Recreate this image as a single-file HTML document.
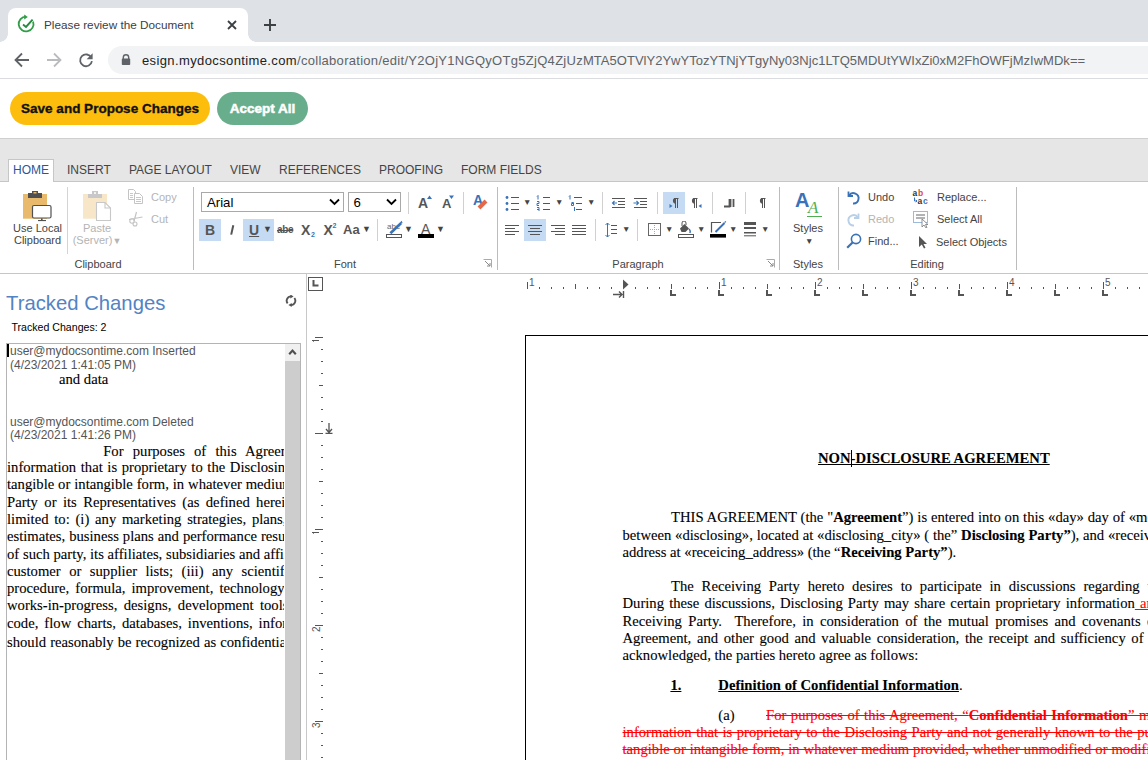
<!DOCTYPE html>
<html><head><meta charset="utf-8">
<style>
*{margin:0;padding:0;box-sizing:border-box}
html,body{width:1148px;height:760px;overflow:hidden;background:#fff;font-family:"Liberation Sans",sans-serif;position:relative}
.a{position:absolute}
.nw{white-space:nowrap}
/* chrome */
#tabbar{left:0;top:0;width:1148px;height:42px;background:#dee1e6}
#tab{left:8px;top:8px;width:240px;height:34px;background:#fff;border-radius:8px 8px 0 0}
#tab:before,#tab:after{content:"";position:absolute;bottom:0;width:8px;height:8px;background:radial-gradient(circle at 0 0,transparent 8px,#fff 8.5px)}
#tab:before{left:-8px;background:radial-gradient(circle at 0 0,#dee1e6 7.5px,#fff 8px)}
#tab:after{right:-8px;background:radial-gradient(circle at 100% 0,#dee1e6 7.5px,#fff 8px)}
#toolbar{left:0;top:42px;width:1148px;height:36px;background:#fff}
#tbline{left:0;top:78px;width:1148px;height:1px;background:#dadce0}
#omni{left:108px;top:46px;width:1060px;height:28px;background:#f1f3f4;border-radius:14px}
.url{top:52.5px;font-size:13px;color:#5f6368}
#url b{font-weight:normal;color:#202124}
/* app header */
.btn{top:92px;height:33px;border-radius:17px;font-weight:bold;font-size:13.5px;line-height:33px;text-align:center}
#save{left:10px;width:200px;background:#fdbd0d;color:#111;-webkit-text-stroke:0.35px #111}
#acc{left:217px;width:91px;background:#69ae8c;color:#fff;-webkit-text-stroke:0.5px #fff}
#hdrline{left:0;top:138px;width:1148px;height:1px;background:#cfcfcf}
#rtabs{left:0;top:139px;width:1148px;height:43px;background:#e6e6e6}
#rtabline{left:0;top:181px;width:1148px;height:1px;background:#c6c6c6}
.rt{top:163px;font-size:12px;color:#444}
#home{left:8px;top:159px;width:46px;height:23px;background:#fff;border:1px solid #c6c6c6;border-bottom:none}
#rbody{left:0;top:182px;width:1148px;height:91px;background:#fff}
#rbline{left:0;top:273px;width:1148px;height:1px;background:#c6c6c6}
.gsep{top:187px;width:1px;height:83px;background:#bcbcbc}
.glabel{top:258px;font-size:11px;color:#444;text-align:center}
.lbl{font-size:11px;color:#444}
.tri{font-size:8.5px;color:#444;line-height:8px}
.dis{color:#b4b4b4}
.hl{background:#c5daf3}
.tcu{left:10px;font-size:12px;color:#555}
.tcd{left:10px;font-size:12px;color:#555}
.ser{font-family:"Liberation Serif",serif;color:#000}
.t{position:absolute;font-family:"Liberation Serif",serif;font-size:14.67px;line-height:17px;white-space:nowrap;color:#000;-webkit-text-stroke:0.1px currentColor}
.b{font-weight:bold}
.u{text-decoration:underline}
.del{color:#f00;text-decoration:line-through}
.ins{color:#f00;text-decoration:underline}
.rn{font-size:10px;color:#555;line-height:10px}
</style></head><body>
<!-- CHROME TAB BAR -->
<div id="tabbar" class="a"></div>
<div id="tab" class="a"></div>
<svg class="a" style="left:16px;top:14px" width="20" height="20" viewBox="0 0 20 20">
 <path d="M10 2.6A7.4 7.4 0 1 0 17.1 7.6" fill="none" stroke="#2f9e47" stroke-width="1.8"/>
 <path d="M8.2 0.6L11.8 3L8.2 5.6Z" fill="#2f9e47"/>
 <path d="M7 10.6L10 13L16.6 5.6" fill="none" stroke="#238a3e" stroke-width="1.9"/>
</svg>
<div class="a nw" style="left:44px;top:18px;font-size:11.76px;color:#3c4043">Please review the Document</div>
<svg class="a" style="left:227px;top:20px" width="10" height="10" viewBox="0 0 10 10"><path d="M1 1L9 9M9 1L1 9" stroke="#3c4043" stroke-width="1.8"/></svg>
<svg class="a" style="left:264px;top:19px" width="12" height="12" viewBox="0 0 12 12"><path d="M6 0V12M0 6H12" stroke="#3c4043" stroke-width="1.9"/></svg>
<!-- TOOLBAR -->
<div id="toolbar" class="a"></div>
<svg class="a" style="left:14px;top:52px" width="16" height="16" viewBox="0 0 16 16"><path d="M15 8H2M8 1.5L1.5 8L8 14.5" fill="none" stroke="#5f6368" stroke-width="1.8"/></svg>
<svg class="a" style="left:46px;top:52px" width="16" height="16" viewBox="0 0 16 16"><path d="M1 8H14M8 1.5L14.5 8L8 14.5" fill="none" stroke="#b9bbbe" stroke-width="1.8"/></svg>
<svg class="a" style="left:78px;top:52px" width="16" height="16" viewBox="0 0 16 16"><path d="M13.3 5.6A5.9 5.9 0 1 0 13.9 9.2" fill="none" stroke="#5f6368" stroke-width="1.8"/><path d="M14.6 1.2V7.2H8.6Z" fill="#5f6368"/></svg>
<div id="omni" class="a"></div>
<svg class="a" style="left:121px;top:54px" width="10" height="11" viewBox="0 0 10 11"><path d="M2.3 5V3.4A2.7 2.7 0 0 1 7.7 3.4V5" fill="none" stroke="#5f6368" stroke-width="1.4"/><rect x="0.8" y="4.6" width="8.4" height="6.4" rx="0.8" fill="#5f6368"/></svg>
<div class="a nw url" style="left:142px;letter-spacing:0.38px;color:#202124">esign.mydocsontime.com</div>
<div class="a nw url" style="left:297px;letter-spacing:0.29px">/collaboration/edit/Y2OjY1NGQyOTg5ZjQ4ZjUz</div>
<div class="a nw url" style="left:583px;letter-spacing:0.02px">MTA5OTVlY2YwYTozYTNjYTgyNy03Njc1LTQ5MDUtYWIxZi0xM2FhOWFjMzIwMDk==</div>
<div id="tbline" class="a"></div>
<!-- APP HEADER -->
<div id="save" class="a btn nw">Save and Propose Changes</div>
<div id="acc" class="a btn nw">Accept All</div>
<div id="hdrline" class="a"></div>
<!-- RIBBON TABS -->
<div id="rtabs" class="a"></div>
<div id="rtabline" class="a"></div>
<div id="home" class="a"></div>
<div class="a rt nw" style="left:13px;color:#2b5797">HOME</div>
<div class="a rt nw" style="left:67px">INSERT</div>
<div class="a rt nw" style="left:129px">PAGE LAYOUT</div>
<div class="a rt nw" style="left:230px">VIEW</div>
<div class="a rt nw" style="left:279px">REFERENCES</div>
<div class="a rt nw" style="left:379px">PROOFING</div>
<div class="a rt nw" style="left:461px">FORM FIELDS</div>
<div id="rbody" class="a"></div>
<div id="rbline" class="a"></div>
<!-- CLIPBOARD GROUP -->
<svg class="a" style="left:22px;top:190px" width="32" height="33" viewBox="0 0 32 33">
 <rect x="1" y="4" width="24" height="24.7" fill="#e9ba6b"/>
 <rect x="6" y="3" width="14" height="5" fill="#505050"/>
 <rect x="10" y="1" width="6" height="3" fill="#505050"/>
 <rect x="11.5" y="2" width="3" height="1.5" fill="#e9ba6b"/>
 <rect x="10.5" y="15.5" width="18.5" height="12.5" rx="1.5" fill="#fff" stroke="#505050" stroke-width="1.2"/>
 <rect x="19" y="28.5" width="1.6" height="1.5" fill="#505050"/>
 <rect x="16" y="30" width="8" height="1.1" fill="#505050"/>
</svg>
<div class="a lbl nw" style="left:13px;top:222.3px;width:49px;text-align:center;line-height:12px;color:#444">Use Local<br>Clipboard</div>
<div class="a" style="left:67px;top:187px;width:1px;height:67px;background:#d4d4d4"></div>
<svg class="a" style="left:82px;top:190px" width="30" height="32" viewBox="0 0 30 32">
 <rect x="1" y="4" width="24" height="24.7" fill="#f8e6c8"/>
 <rect x="6" y="4" width="14" height="4" fill="#c8c8c8"/>
 <rect x="10" y="1" width="6" height="3.5" fill="#c8c8c8"/>
 <rect x="12" y="2.3" width="2" height="1.5" fill="#fff"/>
 <path d="M14.5 12.5H23L28.5 18V30.5H14.5Z" fill="#fff" stroke="#c8c8c8" stroke-width="1.1"/>
 <path d="M23 12.5V18H28.5" fill="none" stroke="#c8c8c8" stroke-width="1.1"/>
</svg>
<div class="a lbl nw dis" style="left:71px;top:222.3px;width:52px;text-align:center;line-height:12px">Paste<br>(Server)<span style="font-size:9px">&#9660;</span></div>
<svg class="a" style="left:127px;top:189px" width="17" height="15" viewBox="0 0 17 15">
 <path d="M1.5 0.5H6.5L8.5 2.5V10.5H1.5Z" fill="#fff" stroke="#c4c4c4"/>
 <path d="M3 4.5H6M3 6.5H6M3 8.5H6" stroke="#b5cbe6" stroke-width="1"/>
 <path d="M7.5 4.5H12.5L15.5 7.5V14.5H7.5Z" fill="#fff" stroke="#c4c4c4"/>
 <path d="M9 8.5H14M9 10.5H14M9 12.5H14" stroke="#b5cbe6" stroke-width="1"/>
</svg>
<div class="a lbl nw dis" style="left:151px;top:191px">Copy</div>
<svg class="a" style="left:128px;top:211px" width="16" height="16" viewBox="0 0 16 16">
 <path d="M8.5 1L6 10M1 8.5L14.5 6" stroke="#c4c4c4" stroke-width="1.2" fill="none"/>
 <circle cx="4" cy="10" r="2.2" fill="none" stroke="#c4c4c4" stroke-width="1.1"/>
 <circle cx="7" cy="13" r="2" fill="none" stroke="#c4c4c4" stroke-width="1.1"/>
</svg>
<div class="a lbl nw dis" style="left:151px;top:213px">Cut</div>
<div class="a glabel nw" style="left:60px;width:76px">Clipboard</div>
<div class="a gsep" style="left:193px"></div>
<!-- FONT GROUP -->
<div class="a" style="left:201px;top:192px;width:143px;height:20px;border:1px solid #a9a9a9;background:#fff"></div>
<div class="a nw" style="left:207px;top:195px;font-size:13.2px;color:#000">Arial</div>
<svg class="a" style="left:329px;top:198px" width="11" height="8" viewBox="0 0 11 8"><path d="M1 1.5L5.5 6L10 1.5" fill="none" stroke="#000" stroke-width="1.8"/></svg>
<div class="a" style="left:348px;top:192px;width:53px;height:20px;border:1px solid #a9a9a9;background:#fff"></div>
<div class="a nw" style="left:353.5px;top:195px;font-size:13.2px;color:#000">6</div>
<svg class="a" style="left:386px;top:198px" width="11" height="8" viewBox="0 0 11 8"><path d="M1 1.5L5.5 6L10 1.5" fill="none" stroke="#000" stroke-width="1.8"/></svg>
<div class="a" style="left:408px;top:192px;width:1px;height:22px;background:#d0d0d0"></div>
<div class="a nw" style="left:418px;top:195px;font-size:14px;color:#555;font-weight:bold">A</div>
<svg class="a" style="left:427px;top:195px" width="5" height="4"><path d="M0 4L2.5 0.5L5 4Z" fill="#3a72b8"/></svg>
<div class="a nw" style="left:442px;top:196px;font-size:13px;color:#555;font-weight:bold">A</div>
<svg class="a" style="left:449px;top:195px" width="5" height="4"><path d="M0 0.5L2.5 4L5 0.5Z" fill="#3a72b8"/></svg>
<div class="a" style="left:463px;top:192px;width:1px;height:22px;background:#d0d0d0"></div>
<div class="a nw" style="left:473px;top:192px;font-size:14px;color:#3a72b8;font-weight:bold">A</div>
<svg class="a" style="left:477px;top:198px" width="12" height="12" viewBox="0 0 12 12"><path d="M2 10L9 3" stroke="#e2694a" stroke-width="4"/></svg>
<div class="a hl" style="left:199px;top:219px;width:22px;height:22px"></div>
<div class="a nw" style="left:205px;top:222px;font-size:14px;color:#555;font-weight:bold">B</div>
<svg class="a" style="left:228px;top:224px" width="8" height="12" viewBox="0 0 8 12"><path d="M3.2 10.6L5.3 1.2" stroke="#555" stroke-width="2"/></svg>
<div class="a hl" style="left:243px;top:219px;width:31px;height:22px"></div>
<div class="a nw" style="left:249px;top:222px;font-size:14px;color:#555;font-weight:bold;text-decoration:underline">U</div>
<div class="a nw" style="left:263px;top:224px;font-size:9px;color:#444">&#9660;</div>
<div class="a nw" style="left:277px;top:224px;font-size:10px;color:#555;font-weight:bold;text-decoration:line-through;letter-spacing:-0.3px">abe</div>
<div class="a nw" style="left:301px;top:222px;font-size:14px;color:#555;font-weight:bold">X</div>
<div class="a nw" style="left:311px;top:231px;font-size:7px;color:#3a72b8;font-weight:bold">2</div>
<div class="a nw" style="left:323.5px;top:222px;font-size:14px;color:#555;font-weight:bold">X</div>
<div class="a nw" style="left:332.5px;top:222px;font-size:7px;color:#3a72b8;font-weight:bold">2</div>
<div class="a nw" style="left:343px;top:222px;font-size:13px;color:#555;font-weight:bold">Aa</div>
<div class="a nw" style="left:362px;top:224px;font-size:9px;color:#444">&#9660;</div>
<div class="a" style="left:377px;top:219px;width:1px;height:22px;background:#d0d0d0"></div>
<svg class="a" style="left:385px;top:220px" width="20" height="20" viewBox="0 0 20 20">
 <text x="2" y="8.7" font-size="8" font-family="Liberation Sans" fill="#666">abc</text>
 <path d="M5.4 13.3L16.2 3" stroke="#3a72b8" stroke-width="2.6"/>
 <path d="M14.8 2.4L16.8 0.8L17.6 3.2Z" fill="#3a72b8"/>
 <rect x="1.5" y="14.5" width="15" height="3" fill="#fff" stroke="#555"/>
</svg>
<div class="a nw" style="left:404px;top:224px;font-size:9px;color:#444">&#9660;</div>
<div class="a nw" style="left:421px;top:221px;font-size:14px;color:#555">A</div>
<div class="a" style="left:418px;top:234px;width:16px;height:3.8px;background:#000"></div>
<div class="a nw" style="left:436px;top:224px;font-size:9px;color:#444">&#9660;</div>
<div class="a glabel nw" style="left:320px;width:50px">Font</div>
<svg class="a" style="left:483px;top:259px" width="9" height="9" viewBox="0 0 9 9"><path d="M0.5 0.5H8.5V8.5" fill="none" stroke="#aaa"/><path d="M2 2L7 7M7 4V7H4" fill="none" stroke="#888"/></svg>
<div class="a gsep" style="left:497px"></div>
<!-- PARAGRAPH GROUP -->
<svg class="a" style="left:504px;top:195px" width="16" height="16" viewBox="0 0 16 16">
 <circle cx="3" cy="2.5" r="1.4" fill="#3a72b8"/><circle cx="3" cy="8.5" r="1.4" fill="#3a72b8"/><circle cx="3" cy="14.5" r="1.4" fill="#3a72b8"/>
 <path d="M7 2.5H15M7 8.5H15M7 14.5H15" stroke="#555" stroke-width="1"/>
</svg>
<div class="a nw tri" style="left:523px;top:198px">&#9660;</div>
<svg class="a" style="left:536px;top:195px" width="16" height="16" viewBox="0 0 16 16">
 <path d="M2 0.5V4.5M1 1.5L2 0.5M1 6.5H3V8.5H1V10.5H3M1 12.5H3V16.5H1M1 14.5H3" stroke="#3a72b8" stroke-width="1" fill="none"/>
 <path d="M7 2.5H14M7 8.5H14M7 14.5H14" stroke="#555" stroke-width="1"/>
</svg>
<div class="a nw tri" style="left:555px;top:198px">&#9660;</div>
<svg class="a" style="left:568px;top:195px" width="16" height="16" viewBox="0 0 16 16">
 <path d="M2 0.5V4.5M1 1.5L2 0.5M3.5 7.5H5.5V10.5H3.5V8.5H5.5M6.5 12V16" stroke="#3a72b8" stroke-width="1" fill="none"/>
 <path d="M6 2.5H14M8 8.5H14M8 14.5H14" stroke="#555" stroke-width="1"/>
</svg>
<div class="a nw tri" style="left:587px;top:198px">&#9660;</div>
<div class="a" style="left:602px;top:192px;width:1px;height:22px;background:#d0d0d0"></div>
<svg class="a" style="left:611px;top:196px" width="15" height="13" viewBox="0 0 15 13">
 <path d="M1 2.5H14M7 5.5H14M7 8.5H14M1 11.5H14" stroke="#555" stroke-width="1"/>
 <path d="M6 7H1.5M3.5 5L1.5 7L3.5 9" stroke="#3a72b8" stroke-width="1.1" fill="none"/>
</svg>
<svg class="a" style="left:633px;top:196px" width="15" height="13" viewBox="0 0 15 13">
 <path d="M1 2.5H14M7 5.5H14M7 8.5H14M1 11.5H14" stroke="#555" stroke-width="1"/>
 <path d="M0.5 7H5.5M3.5 5L5.5 7L3.5 9" stroke="#3a72b8" stroke-width="1.1" fill="none"/>
</svg>
<div class="a" style="left:657px;top:192px;width:1px;height:22px;background:#d0d0d0"></div>
<div class="a hl" style="left:663px;top:192px;width:22px;height:22px"></div>
<svg class="a" style="left:672px;top:198px" width="7" height="10" viewBox="0 0 7 10"><path d="M2 0.5H6.5M3.5 0.5V10M5.5 0.5V10" stroke="#555" stroke-width="1" fill="none"/><path d="M3.5 0A2.6 2.8 0 0 0 3.5 5.6Z" fill="#555"/></svg>
<svg class="a" style="left:669px;top:204px" width="4" height="4"><path d="M0.5 0L3.5 2L0.5 4Z" fill="#3a72b8"/></svg>
<svg class="a" style="left:691px;top:198px" width="7" height="10" viewBox="0 0 7 10"><path d="M2 0.5H6.5M3.5 0.5V10M5.5 0.5V10" stroke="#555" stroke-width="1" fill="none"/><path d="M3.5 0A2.6 2.8 0 0 0 3.5 5.6Z" fill="#555"/></svg>
<svg class="a" style="left:698px;top:204px" width="4" height="4"><path d="M3.5 0L0.5 2L3.5 4Z" fill="#3a72b8"/></svg>
<div class="a" style="left:712px;top:192px;width:1px;height:22px;background:#d0d0d0"></div>
<svg class="a" style="left:724px;top:198px" width="11" height="10" viewBox="0 0 11 10"><path d="M0 8.5H5.5V1M6.5 1V9M9.5 1V9" stroke="#555" stroke-width="1.8" fill="none"/></svg>
<div class="a" style="left:745px;top:192px;width:1px;height:22px;background:#d0d0d0"></div>
<svg class="a" style="left:759px;top:198px" width="7" height="10" viewBox="0 0 7 10"><path d="M2 0.5H6.5M3.5 0.5V10M5.5 0.5V10" stroke="#555" stroke-width="1" fill="none"/><path d="M3.5 0A2.6 2.8 0 0 0 3.5 5.6Z" fill="#555"/></svg>
<svg class="a" style="left:505px;top:224px" width="14" height="12" viewBox="0 0 14 12"><path d="M0 1.5H14M0 4.5H10M0 7.5H14M0 10.5H10" stroke="#555" stroke-width="1.1"/></svg>
<div class="a hl" style="left:524px;top:219px;width:22px;height:22px"></div>
<svg class="a" style="left:528px;top:224px" width="14" height="12" viewBox="0 0 14 12"><path d="M0 1.5H14M2 4.5H12M0 7.5H14M2 10.5H12" stroke="#555" stroke-width="1.1"/></svg>
<svg class="a" style="left:551px;top:224px" width="14" height="12" viewBox="0 0 14 12"><path d="M0 1.5H14M4 4.5H14M0 7.5H14M4 10.5H14" stroke="#555" stroke-width="1.1"/></svg>
<svg class="a" style="left:572px;top:224px" width="14" height="12" viewBox="0 0 14 12"><path d="M0 1.5H14M0 4.5H14M0 7.5H14M0 10.5H14" stroke="#555" stroke-width="1.1"/></svg>
<div class="a" style="left:595px;top:219px;width:1px;height:22px;background:#d0d0d0"></div>
<svg class="a" style="left:605px;top:222px" width="14" height="16" viewBox="0 0 14 16"><path d="M6 3.5H12M6 7.5H12M6 11.5H12" stroke="#555" stroke-width="1"/><path d="M2.5 1V15M0.5 3L2.5 1L4.5 3M0.5 13L2.5 15L4.5 13" stroke="#3a72b8" stroke-width="1" fill="none"/></svg>
<div class="a nw tri" style="left:622px;top:225px">&#9660;</div>
<div class="a" style="left:637px;top:219px;width:1px;height:22px;background:#d0d0d0"></div>
<svg class="a" style="left:648px;top:223px" width="13" height="13" viewBox="0 0 13 13"><rect x="0.5" y="0.5" width="12" height="12" fill="none" stroke="#666"/><path d="M6.5 2V11M2 6.5H11" stroke="#aaa" stroke-dasharray="1 1"/></svg>
<div class="a nw tri" style="left:665px;top:225px">&#9660;</div>
<svg class="a" style="left:677px;top:221px" width="18" height="17" viewBox="0 0 18 17"><path d="M3 7.5L7.5 3L12 7.5L8.5 11H4.5Z" fill="#555"/><path d="M5 5V2A2 2 0 0 1 9 2V4" stroke="#555" stroke-width="1" fill="none"/><path d="M12 8Q14 10 12.8 12" stroke="#3a72b8" stroke-width="1.4" fill="none"/><rect x="1.5" y="13.5" width="15" height="3" fill="#fff" stroke="#555"/></svg>
<div class="a nw tri" style="left:697px;top:225px">&#9660;</div>
<svg class="a" style="left:710px;top:221px" width="17" height="17" viewBox="0 0 17 17"><path d="M1.5 11.5V1.5H11" stroke="#555" stroke-width="1.2" fill="none"/><path d="M5.5 11L14.5 2" stroke="#3a72b8" stroke-width="2"/><path d="M14.5 1.5L16 0.5" stroke="#3a72b8" stroke-width="1.2"/><rect x="0" y="13" width="16" height="3.6" fill="#000"/></svg>
<div class="a nw tri" style="left:729px;top:225px">&#9660;</div>
<svg class="a" style="left:744px;top:222px" width="12" height="15" viewBox="0 0 12 15"><rect x="0" y="0" width="12" height="3" fill="#555"/><rect x="0" y="5" width="12" height="2" fill="#555"/><rect x="0" y="10" width="12" height="1.5" fill="#555"/><rect x="0" y="13.3" width="12" height="1" fill="#555"/></svg>
<div class="a nw tri" style="left:761px;top:225px">&#9660;</div>
<div class="a glabel nw" style="left:600px;width:76px">Paragraph</div>
<svg class="a" style="left:766px;top:259px" width="9" height="9" viewBox="0 0 9 9"><path d="M0.5 0.5H8.5V8.5" fill="none" stroke="#aaa"/><path d="M2 2L7 7M7 4V7H4" fill="none" stroke="#888"/></svg>
<div class="a gsep" style="left:779px"></div>
<!-- STYLES -->
<div class="a nw" style="left:795px;top:189px;font-size:20px;color:#3a72b8;font-weight:bold">A</div>
<div class="a nw" style="left:808px;top:198px;font-size:17px;color:#4caf50;font-style:italic;font-family:'Liberation Serif',serif">A</div>
<div class="a" style="left:807px;top:216px;width:15px;height:1px;background:#4caf50"></div>
<div class="a lbl nw" style="left:790px;top:222px;width:36px;text-align:center">Styles</div>
<div class="a nw tri" style="left:805px;top:237px">&#9660;</div>
<div class="a glabel nw" style="left:790px;width:36px">Styles</div>
<div class="a gsep" style="left:838px"></div>
<!-- EDITING -->
<svg class="a" style="left:846px;top:189px" width="15" height="16" viewBox="0 0 15 16"><path d="M2.5 2.5V7H7" fill="none" stroke="#3a72b8" stroke-width="1.8"/><path d="M3 6.5A5.2 5.2 0 1 1 7 14.5" fill="none" stroke="#3a72b8" stroke-width="1.9"/></svg>
<div class="a lbl nw" style="left:868px;top:191px">Undo</div>
<svg class="a" style="left:846px;top:211px" width="15" height="16" viewBox="0 0 15 16"><path d="M12.5 2.5V7H8" fill="none" stroke="#b8cfe8" stroke-width="1.8"/><path d="M12 6.5A5.2 5.2 0 1 0 8 14.5" fill="none" stroke="#b8cfe8" stroke-width="1.9"/></svg>
<div class="a lbl nw dis" style="left:868px;top:213px">Redo</div>
<svg class="a" style="left:846px;top:233px" width="16" height="16" viewBox="0 0 16 16"><circle cx="10" cy="6" r="4.6" fill="none" stroke="#3a72b8" stroke-width="1.6"/><path d="M6.8 9.2L1.2 14.8" stroke="#3a72b8" stroke-width="2.2"/></svg>
<div class="a lbl nw" style="left:868px;top:235px">Find...</div>
<svg class="a" style="left:912px;top:189px" width="19" height="16" viewBox="0 0 19 16">
 <text x="0.5" y="7" font-size="8.5" font-weight="bold" font-family="Liberation Sans" fill="#333">a</text><text x="6" y="7" font-size="8.5" font-weight="bold" font-family="Liberation Sans" fill="#e04a2a">b</text>
 <text x="5.5" y="15" font-size="8.5" font-weight="bold" font-family="Liberation Sans" fill="#333">a</text><text x="11" y="15" font-size="8.5" font-weight="bold" font-family="Liberation Sans" fill="#3a72b8">c</text>
 <path d="M2.5 8.5V12H5M3.8 10.8L5 12L3.8 13.2" stroke="#3a72b8" stroke-width="1" fill="none"/>
</svg>
<div class="a lbl nw" style="left:937px;top:191px">Replace...</div>
<svg class="a" style="left:913px;top:211px" width="17" height="17" viewBox="0 0 17 17"><rect x="0.5" y="0.5" width="14" height="11" fill="none" stroke="#3a72b8" stroke-dasharray="1 1"/><path d="M3 4H12M3 7H12" stroke="#666"/><path d="M9 8V16L11 14L13 17L14 16.5L12.5 13.5H15Z" fill="#fff" stroke="#777" stroke-width="0.8"/></svg>
<div class="a lbl nw" style="left:937px;top:213px">Select All</div>
<svg class="a" style="left:918px;top:235px" width="9" height="14" viewBox="0 0 9 14"><path d="M1 1V12L3.8 9.5L6 13.5L7.5 12.8L5.5 9H9Z" fill="#555"/></svg>
<div class="a lbl nw" style="left:936px;top:236px">Select Objects</div>
<div class="a glabel nw" style="left:900px;width:54px">Editing</div>
<div class="a gsep" style="left:1016px"></div>


<!-- LEFT PANEL -->
<div class="a nw" id="tctitle" style="left:6px;top:292px;font-size:20.3px;color:#5283c4;letter-spacing:0px">Tracked Changes</div>
<svg class="a" style="left:285px;top:295px" width="12" height="12" viewBox="0 0 12 12"><path d="M2.66 8.41A4.3 4.3 0 0 1 6 1.4" fill="none" stroke="#555" stroke-width="1.9"/><path d="M5.3 -0.6L8.6 1.4L5.3 3.4Z" fill="#555"/><path d="M9.34 2.99A4.3 4.3 0 0 1 6 10" fill="none" stroke="#555" stroke-width="1.9"/><path d="M6.7 8L3.4 10L6.7 12Z" fill="#555"/></svg>
<div class="a nw" id="tccount" style="left:11.5px;top:320.5px;font-size:10.6px;color:#000">Tracked Changes: 2</div>
<div class="a" style="left:6px;top:343px;width:295px;height:430px;border:1px solid #b4b4b4;background:#fff"></div>
<div class="a" style="left:285px;top:344px;width:15px;height:420px;background:#f0f0f0"></div>
<div class="a" style="left:285px;top:361px;width:15px;height:410px;background:#cdcdcd"></div>
<svg class="a" style="left:288px;top:348px" width="9" height="8" viewBox="0 0 9 8"><path d="M1.2 6.2L4.5 2.5L7.8 6.2" fill="none" stroke="#505050" stroke-width="2.1"/></svg>
<div class="a" style="left:7px;top:344px;width:2px;height:13px;background:#000"></div>
<div class="a nw tcu" style="top:344.3px">user@mydocsontime.com Inserted</div>
<div class="a nw tcd" style="top:357.5px">(4/23/2021 1:41:05 PM)</div>
<span class="t" style="left:59px;top:371px">and data</span>
<div class="a nw tcu" style="top:414.5px">user@mydocsontime.com Deleted</div>
<div class="a nw tcd" style="top:428px">(4/23/2021 1:41:26 PM)</div>
<div class="a" id="tcpara" style="left:0;top:0;width:284px;height:760px;overflow:hidden">
<div class="t" style="left:103.2px;top:443px;word-spacing:5.53px">For purposes of this Agreement, "Confidential</div>
<div class="t" style="left:7.0px;top:459px;word-spacing:0.91px">information that is proprietary to the Disclosing Party</div>
<div class="t" style="left:7.0px;top:476px;word-spacing:0.24px">tangible or intangible form, in whatever medium provided</div>
<div class="t" style="left:7.0px;top:494px;word-spacing:2.72px">Party or its Representatives (as defined herein) including</div>
<div class="t" style="left:7.0px;top:511px;word-spacing:2.08px">limited to: (i) any marketing strategies, plans, financial</div>
<div class="t" style="left:7.0px;top:528px;word-spacing:0.32px">estimates, business plans and performance results relating</div>
<div class="t" style="left:7.0px;top:546px;word-spacing:0.05px">of such party, its affiliates, subsidiaries and affiliated</div>
<div class="t" style="left:7.0px;top:563px;word-spacing:4.77px">customer or supplier lists; (iii) any scientific or technical</div>
<div class="t" style="left:7.0px;top:580px;word-spacing:2.45px">procedure, formula, improvement, technology or method</div>
<div class="t" style="left:7.0px;top:597px;word-spacing:2.78px">works-in-progress, designs, development tools, specifications</div>
<div class="t" style="left:7.0px;top:615px;word-spacing:2.38px">code, flow charts, databases, inventions, information and</div>
<div class="t" style="left:7.0px;top:634px;word-spacing:0.40px">should reasonably be recognized as confidential information</div>
</div>
<div class="a" style="left:306px;top:274px;width:1px;height:486px;background:#c8c8c8"></div>

<div class="a" style="left:308px;top:277px;width:15px;height:14px;border:1px solid #555"></div>
<svg class="a" style="left:312px;top:280px" width="7" height="7"><path d="M1.5 0V5.5H6.5" fill="none" stroke="#555" stroke-width="2"/></svg>
<div class="a" style="left:527px;top:282px;width:1px;height:7px;background:#555"></div>
<div class="a nw rn" style="left:529px;top:277.5px">1</div>
<div class="a" style="left:539px;top:287px;width:1px;height:2px;background:#555"></div>
<div class="a" style="left:551px;top:287px;width:1px;height:2px;background:#555"></div>
<div class="a" style="left:563px;top:287px;width:1px;height:2px;background:#555"></div>
<div class="a" style="left:575px;top:284px;width:1px;height:5px;background:#555"></div>
<div class="a" style="left:587px;top:287px;width:1px;height:2px;background:#555"></div>
<div class="a" style="left:599px;top:287px;width:1px;height:2px;background:#555"></div>
<div class="a" style="left:611px;top:287px;width:1px;height:2px;background:#555"></div>
<div class="a" style="left:635px;top:287px;width:1px;height:2px;background:#555"></div>
<div class="a" style="left:647px;top:287px;width:1px;height:2px;background:#555"></div>
<div class="a" style="left:659px;top:287px;width:1px;height:2px;background:#555"></div>
<div class="a" style="left:671px;top:284px;width:1px;height:5px;background:#555"></div>
<div class="a" style="left:683px;top:287px;width:1px;height:2px;background:#555"></div>
<div class="a" style="left:695px;top:287px;width:1px;height:2px;background:#555"></div>
<div class="a" style="left:707px;top:287px;width:1px;height:2px;background:#555"></div>
<div class="a" style="left:719px;top:282px;width:1px;height:7px;background:#555"></div>
<div class="a nw rn" style="left:721px;top:277.5px">1</div>
<div class="a" style="left:731px;top:287px;width:1px;height:2px;background:#555"></div>
<div class="a" style="left:743px;top:287px;width:1px;height:2px;background:#555"></div>
<div class="a" style="left:755px;top:287px;width:1px;height:2px;background:#555"></div>
<div class="a" style="left:767px;top:284px;width:1px;height:5px;background:#555"></div>
<div class="a" style="left:779px;top:287px;width:1px;height:2px;background:#555"></div>
<div class="a" style="left:791px;top:287px;width:1px;height:2px;background:#555"></div>
<div class="a" style="left:803px;top:287px;width:1px;height:2px;background:#555"></div>
<div class="a" style="left:815px;top:282px;width:1px;height:7px;background:#555"></div>
<div class="a nw rn" style="left:817px;top:277.5px">2</div>
<div class="a" style="left:827px;top:287px;width:1px;height:2px;background:#555"></div>
<div class="a" style="left:839px;top:287px;width:1px;height:2px;background:#555"></div>
<div class="a" style="left:851px;top:287px;width:1px;height:2px;background:#555"></div>
<div class="a" style="left:863px;top:284px;width:1px;height:5px;background:#555"></div>
<div class="a" style="left:875px;top:287px;width:1px;height:2px;background:#555"></div>
<div class="a" style="left:887px;top:287px;width:1px;height:2px;background:#555"></div>
<div class="a" style="left:899px;top:287px;width:1px;height:2px;background:#555"></div>
<div class="a" style="left:911px;top:282px;width:1px;height:7px;background:#555"></div>
<div class="a nw rn" style="left:913px;top:277.5px">3</div>
<div class="a" style="left:923px;top:287px;width:1px;height:2px;background:#555"></div>
<div class="a" style="left:935px;top:287px;width:1px;height:2px;background:#555"></div>
<div class="a" style="left:947px;top:287px;width:1px;height:2px;background:#555"></div>
<div class="a" style="left:959px;top:284px;width:1px;height:5px;background:#555"></div>
<div class="a" style="left:971px;top:287px;width:1px;height:2px;background:#555"></div>
<div class="a" style="left:983px;top:287px;width:1px;height:2px;background:#555"></div>
<div class="a" style="left:995px;top:287px;width:1px;height:2px;background:#555"></div>
<div class="a" style="left:1007px;top:282px;width:1px;height:7px;background:#555"></div>
<div class="a nw rn" style="left:1009px;top:277.5px">4</div>
<div class="a" style="left:1019px;top:287px;width:1px;height:2px;background:#555"></div>
<div class="a" style="left:1031px;top:287px;width:1px;height:2px;background:#555"></div>
<div class="a" style="left:1043px;top:287px;width:1px;height:2px;background:#555"></div>
<div class="a" style="left:1055px;top:284px;width:1px;height:5px;background:#555"></div>
<div class="a" style="left:1067px;top:287px;width:1px;height:2px;background:#555"></div>
<div class="a" style="left:1079px;top:287px;width:1px;height:2px;background:#555"></div>
<div class="a" style="left:1091px;top:287px;width:1px;height:2px;background:#555"></div>
<div class="a" style="left:1103px;top:282px;width:1px;height:7px;background:#555"></div>
<div class="a nw rn" style="left:1105px;top:277.5px">5</div>
<div class="a" style="left:1115px;top:287px;width:1px;height:2px;background:#555"></div>
<div class="a" style="left:1127px;top:287px;width:1px;height:2px;background:#555"></div>
<div class="a" style="left:1139px;top:287px;width:1px;height:2px;background:#555"></div>
<svg class="a" style="left:670px;top:290px" width="7" height="6"><path d="M1 0V5H6" fill="none" stroke="#555" stroke-width="2"/></svg>
<svg class="a" style="left:718px;top:290px" width="7" height="6"><path d="M1 0V5H6" fill="none" stroke="#555" stroke-width="2"/></svg>
<svg class="a" style="left:766px;top:290px" width="7" height="6"><path d="M1 0V5H6" fill="none" stroke="#555" stroke-width="2"/></svg>
<svg class="a" style="left:814px;top:290px" width="7" height="6"><path d="M1 0V5H6" fill="none" stroke="#555" stroke-width="2"/></svg>
<svg class="a" style="left:862px;top:290px" width="7" height="6"><path d="M1 0V5H6" fill="none" stroke="#555" stroke-width="2"/></svg>
<svg class="a" style="left:910px;top:290px" width="7" height="6"><path d="M1 0V5H6" fill="none" stroke="#555" stroke-width="2"/></svg>
<svg class="a" style="left:958px;top:290px" width="7" height="6"><path d="M1 0V5H6" fill="none" stroke="#555" stroke-width="2"/></svg>
<svg class="a" style="left:1006px;top:290px" width="7" height="6"><path d="M1 0V5H6" fill="none" stroke="#555" stroke-width="2"/></svg>
<svg class="a" style="left:1054px;top:290px" width="7" height="6"><path d="M1 0V5H6" fill="none" stroke="#555" stroke-width="2"/></svg>
<svg class="a" style="left:1102px;top:290px" width="7" height="6"><path d="M1 0V5H6" fill="none" stroke="#555" stroke-width="2"/></svg>
<svg class="a" style="left:622px;top:279px" width="8" height="11"><path d="M1 0.5L6.5 5.5L1 10.5Z" fill="#555"/></svg>
<svg class="a" style="left:613px;top:291px" width="12" height="7"><path d="M0 3.5H9M6 0.5L9 3.5L6 6.5M10.5 0V7" fill="none" stroke="#555" stroke-width="1.4"/></svg>
<div class="a" style="left:315px;top:337px;width:8px;height:1px;background:#555"></div>
<div class="a" style="left:321px;top:349px;width:2px;height:1px;background:#555"></div>
<div class="a" style="left:321px;top:361px;width:2px;height:1px;background:#555"></div>
<div class="a" style="left:321px;top:373px;width:2px;height:1px;background:#555"></div>
<div class="a" style="left:319px;top:385px;width:4px;height:1px;background:#555"></div>
<div class="a" style="left:321px;top:397px;width:2px;height:1px;background:#555"></div>
<div class="a" style="left:321px;top:409px;width:2px;height:1px;background:#555"></div>
<div class="a" style="left:321px;top:421px;width:2px;height:1px;background:#555"></div>
<div class="a" style="left:315px;top:433px;width:8px;height:1px;background:#555"></div>
<div class="a" style="left:321px;top:445px;width:2px;height:1px;background:#555"></div>
<div class="a" style="left:321px;top:457px;width:2px;height:1px;background:#555"></div>
<div class="a" style="left:321px;top:469px;width:2px;height:1px;background:#555"></div>
<div class="a" style="left:319px;top:481px;width:4px;height:1px;background:#555"></div>
<div class="a" style="left:321px;top:493px;width:2px;height:1px;background:#555"></div>
<div class="a" style="left:321px;top:505px;width:2px;height:1px;background:#555"></div>
<div class="a" style="left:321px;top:517px;width:2px;height:1px;background:#555"></div>
<div class="a" style="left:315px;top:529px;width:8px;height:1px;background:#555"></div>
<div class="a" style="left:312px;top:532px;width:7px;height:1px;background:#555"></div><div class="a" style="left:313px;top:533px;width:1px;height:1px;background:#6a8fc8"></div>
<div class="a" style="left:321px;top:541px;width:2px;height:1px;background:#555"></div>
<div class="a" style="left:321px;top:553px;width:2px;height:1px;background:#555"></div>
<div class="a" style="left:321px;top:565px;width:2px;height:1px;background:#555"></div>
<div class="a" style="left:319px;top:577px;width:4px;height:1px;background:#555"></div>
<div class="a" style="left:321px;top:589px;width:2px;height:1px;background:#555"></div>
<div class="a" style="left:321px;top:601px;width:2px;height:1px;background:#555"></div>
<div class="a" style="left:321px;top:613px;width:2px;height:1px;background:#555"></div>
<div class="a" style="left:315px;top:625px;width:8px;height:1px;background:#555"></div>
<div class="a nw rn" style="left:311.5px;top:632px;font-size:10px;line-height:10px;transform:rotate(-90deg);transform-origin:0 0">2</div>
<div class="a" style="left:321px;top:637px;width:2px;height:1px;background:#555"></div>
<div class="a" style="left:321px;top:649px;width:2px;height:1px;background:#555"></div>
<div class="a" style="left:321px;top:661px;width:2px;height:1px;background:#555"></div>
<div class="a" style="left:319px;top:673px;width:4px;height:1px;background:#555"></div>
<div class="a" style="left:321px;top:685px;width:2px;height:1px;background:#555"></div>
<div class="a" style="left:321px;top:697px;width:2px;height:1px;background:#555"></div>
<div class="a" style="left:321px;top:709px;width:2px;height:1px;background:#555"></div>
<div class="a" style="left:315px;top:721px;width:8px;height:1px;background:#555"></div>
<div class="a nw rn" style="left:311.5px;top:728px;font-size:10px;line-height:10px;transform:rotate(-90deg);transform-origin:0 0">3</div>
<div class="a" style="left:321px;top:733px;width:2px;height:1px;background:#555"></div>
<div class="a" style="left:321px;top:745px;width:2px;height:1px;background:#555"></div>
<div class="a" style="left:321px;top:757px;width:2px;height:1px;background:#555"></div>
<div class="a" style="left:315px;top:337px;width:8px;height:1px;background:#555"></div>
<div class="a" style="left:312px;top:340px;width:7px;height:1px;background:#555"></div><div class="a" style="left:313px;top:341px;width:1px;height:1px;background:#6a8fc8"></div>
<svg class="a" style="left:325px;top:423px" width="8" height="11"><path d="M4 0V9M1 6L4 9.5L7 6M0.5 10.5H7.5" fill="none" stroke="#555" stroke-width="1.3"/></svg>
<div class="a" style="left:525px;top:335px;width:700px;height:500px;border-left:1px solid #000;border-top:1px solid #000"></div>
<div class="a" style="left:851px;top:450px;width:1px;height:17px;background:#000"></div>
<div class="t" style="left:818.0px;top:450px"><span class="b u">NON-DISCLOSURE AGREEMENT</span></div>
<div class="t" style="left:671.0px;top:509px;word-spacing:0.18px">THIS AGREEMENT (the "<span class="b">Agreement</span>”) is entered into on this «day» day of «month»,</div>
<div class="t" style="left:622.5px;top:527px;word-spacing:0.11px">between «disclosing», located at «disclosing_city» ( the” <span class="b">Disclosing Party”</span>), and «receiving»</div>
<div class="t" style="left:622.5px;top:544px">address at «receicing_address» (the “<span class="b">Receiving Party”</span>).</div>
<div class="t" style="left:671.0px;top:578px;word-spacing:4.17px">The Receiving Party hereto desires to participate in discussions regarding the</div>
<div class="t" style="left:622.5px;top:595px;word-spacing:1.48px">During these discussions, Disclosing Party may share certain proprietary information<span class="ins"> and</span></div>
<div class="t" style="left:622.5px;top:613px;word-spacing:2.70px">Receiving Party.  Therefore, in consideration of the mutual promises and covenants contained</div>
<div class="t" style="left:622.5px;top:630px;word-spacing:2.00px">Agreement, and other good and valuable consideration, the receipt and sufficiency of which</div>
<div class="t" style="left:622.5px;top:647px">acknowledged, the parties hereto agree as follows:</div>
<div class="t" style="left:670.4px;top:677px"><span class="b u">1.</span></div>
<div class="t" style="left:718.3px;top:677px"><span class="b u">Definition of Confidential Information</span>.</div>
<div class="t" style="left:718.3px;top:707px">(a)</div>
<div class="t" style="left:766.0px;top:707px;word-spacing:0.81px"><span class="del">For purposes of this Agreement, “</span><span class="del b">Confidential Information</span><span class="del">” means</span></div>
<div class="t" style="left:622.5px;top:724px;word-spacing:0.77px"><span class="del">information that is proprietary to the Disclosing Party and not generally known to the public</span></div>
<div class="t" style="left:622.5px;top:741px;word-spacing:0.23px"><span class="del">tangible or intangible form, in whatever medium provided, whether unmodified or modified</span></div>
</body></html>
